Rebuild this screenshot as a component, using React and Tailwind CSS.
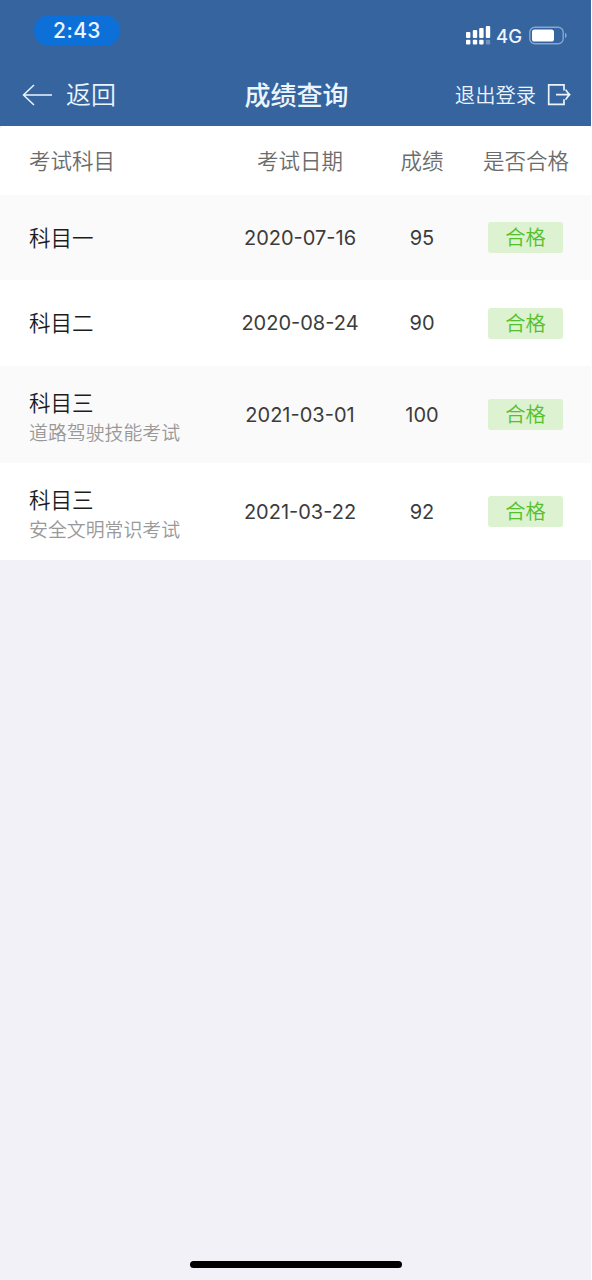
const results = [
  { subject: "科目一", date: "2020-07-16", score: 95, height: "h-[85px]" },
  { subject: "科目二", date: "2020-08-24", score: 90, height: "h-[86px]" },
  { subject: "科目三", detail: "道路驾驶技能考试", date: "2021-03-01", score: 100, height: "h-[97px]" },
  { subject: "科目三", detail: "安全文明常识考试", date: "2021-03-22", score: 92, height: "h-[97px]" },
];

export default function App() {
  return (
    <div className="min-h-screen bg-white pr-px font-['Inter','Noto_Sans_CJK_SC',sans-serif]">
      <div className="flex h-screen flex-col bg-[#f1f1f7]">
        <header className="bg-[#35649f] text-[#eaf5ff]">
          <StatusBar />
          <NavBar />
        </header>

        {/* Score table */}
        <main className="rounded-t-[4px] bg-white">
          <div className="grid h-[69px] grid-cols-[223px_154px_90px_118px] items-center pt-px text-center text-[21.5px] font-[350] text-[#6c6c6c]">
            <span className="pl-[29px] text-left">考试科目</span>
            <span>考试日期</span>
            <span>成绩</span>
            <span>是否合格</span>
          </div>
          {results.map((r) => (
            <Row key={r.date} {...r} />
          ))}
        </main>

        <div className="mx-auto mt-auto mb-3 h-[7px] w-[212px] rounded-full bg-black" />
      </div>
    </div>
  );
}

function StatusBar() {
  return (
    <div className="flex h-[63px] items-start justify-between pr-[23px] pl-[34px]">
      <span className="mt-[15px] flex h-[31px] w-[86px] items-center justify-center rounded-full bg-[#0d70d9] text-[21px] font-medium tracking-[0.4px]">
        2:43
      </span>
      <div className="mt-[24px] flex h-[22px] items-center">
        {/* Dual SIM signal */}
        <svg width="25" height="20" viewBox="0 0 25 20" fill="#fff">
          <rect x="0" y="7" width="4.4" height="6" rx="1" />
          <rect x="6.8" y="5" width="4.4" height="8" rx="1" />
          <rect x="13.2" y="3" width="4.4" height="10" rx="1" />
          <rect x="19.8" y="1" width="4.4" height="12" rx="1" />
          <rect x="0" y="14.8" width="4.4" height="4.6" rx="1" />
          <rect x="6.8" y="14.8" width="4.4" height="4.6" rx="1" />
          <rect x="13.2" y="14.8" width="4.4" height="4.6" rx="1" />
          <rect x="19.8" y="14.8" width="4.4" height="4.6" rx="1" opacity="0.3" />
        </svg>
        <span className="ml-[5px] w-[27px] pt-[2px] text-[18.5px] leading-none font-[450]">4G</span>
        <svg className="ml-[6px]" width="39" height="19" viewBox="0 0 39 19" fill="none">
          <rect x="0.8" y="1.3" width="33.4" height="16.4" rx="5" stroke="#86a6cd" strokeWidth="1.4" />
          <rect x="3" y="3.5" width="22" height="12" rx="2.6" fill="#fff" />
          <path d="M36 6.8c2.2.9 2.2 4.5 0 5.4z" fill="#86a6cd" />
        </svg>
      </div>
    </div>
  );
}

function NavBar() {
  return (
    <div className="grid h-[63px] grid-cols-[1fr_auto_1fr] items-center pr-[20px] pl-[22px]">
      <button className="flex items-center text-[25px] font-[350]">
        <svg className="mr-[14px]" width="30" height="22" viewBox="0 0 30 22" fill="none" stroke="currentColor" strokeWidth="1.5">
          <path d="M12 1L1.5 11 12 21M1.5 11H30" />
        </svg>
        <span className="pt-[3px]">返回</span>
      </button>
      <h1 className="pt-[2px] text-[26px] font-medium">成绩查询</h1>
      <button className="flex items-center justify-end text-[20.3px] font-[350]">
        <span className="pt-[3px]">退出登录</span>
        <svg className="ml-[11px]" width="24" height="24" viewBox="0 0 24 24" fill="none" stroke="currentColor" strokeWidth="1.7">
          <path d="M17 7.5V1.8H1.7v19.6H17v-5.2M9 11.6h13.5M18.6 6.6q2 3.2 4 5q-2 1.8-4 5" />
        </svg>
      </button>
    </div>
  );
}

function Row({ subject, detail, date, score, height }) {
  return (
    <div className={`grid grid-cols-[223px_154px_90px_117px] items-center text-center text-[20px] text-[#3c3c3c] even:bg-[#fafafa] ${height}`}>
      <div className={detail ? "pt-[5px] pl-[29px] text-left" : "pl-[29px] text-left"}>
        <p className="text-[21.5px] leading-[32px] font-[350] text-[#1c1c1c]">{subject}</p>
        {detail && <p className="text-[18.9px] leading-[29px] font-[350] text-[#999]">{detail}</p>}
      </div>
      <span>{date}</span>
      <span>{score}</span>
      <span className="mx-auto flex h-[31px] w-[75px] items-center justify-center rounded-[3px] bg-[#dcf2d0] pt-[2px] text-[20.3px] font-[350] text-[#55c02b]">
        合格
      </span>
    </div>
  );
}
